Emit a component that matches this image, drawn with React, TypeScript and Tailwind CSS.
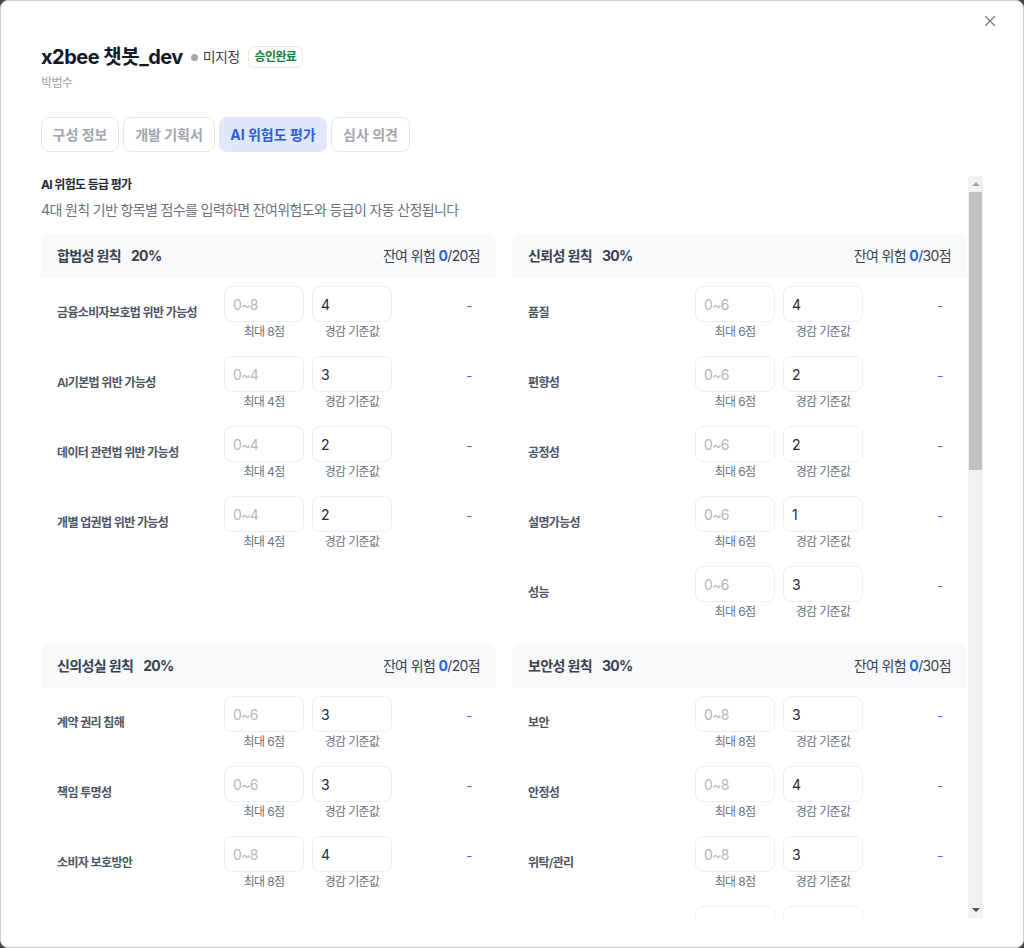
import React from 'react';
import { X } from 'lucide-react';

type Item = { label: string; max: number; base: number };
type Principle = { name: string; weight: number; total: number; items: Item[] };

const principles: Principle[] = [
  {
    name: '합법성 원칙',
    weight: 20,
    total: 20,
    items: [
      { label: '금융소비자보호법 위반 가능성', max: 8, base: 4 },
      { label: 'AI기본법 위반 가능성', max: 4, base: 3 },
      { label: '데이터 관련법 위반 가능성', max: 4, base: 2 },
      { label: '개별 업권법 위반 가능성', max: 4, base: 2 },
    ],
  },
  {
    name: '신뢰성 원칙',
    weight: 30,
    total: 30,
    items: [
      { label: '품질', max: 6, base: 4 },
      { label: '편향성', max: 6, base: 2 },
      { label: '공정성', max: 6, base: 2 },
      { label: '설명가능성', max: 6, base: 1 },
      { label: '성능', max: 6, base: 3 },
    ],
  },
  {
    name: '신의성실 원칙',
    weight: 20,
    total: 20,
    items: [
      { label: '계약 권리 침해', max: 6, base: 3 },
      { label: '책임 투명성', max: 6, base: 3 },
      { label: '소비자 보호방안', max: 8, base: 4 },
    ],
  },
  {
    name: '보안성 원칙',
    weight: 30,
    total: 30,
    items: [
      { label: '보안', max: 8, base: 3 },
      { label: '안정성', max: 8, base: 4 },
      { label: '위탁/관리', max: 8, base: 3 },
      { label: '개인정보 보호', max: 6, base: 2 },
    ],
  },
];

const grades = [
  { grade: '1등급', range: '0 ~ 20점', desc: '저위험 · 자체 점검 후 운영 가능' },
  { grade: '2등급', range: '21 ~ 40점', desc: '보통 · 정기 모니터링 필요' },
  { grade: '3등급', range: '41 ~ 60점', desc: '고위험 · 보완 조치 후 재심사' },
  { grade: '4등급', range: '61점 이상', desc: '매우 높음 · 운영 불가' },
];

const tabs = [
  { label: '구성 정보', w: 'w-[78px]' },
  { label: '개발 기획서', w: 'w-[92px]' },
  { label: 'AI 위험도 평가', w: 'w-[108px]' },
  { label: '심사 의견', w: 'w-[79px]' },
];

const ScoreRow: React.FC<{ item: Item }> = ({ item }) => (
  <div className="flex items-center py-2 pl-4 pr-[14px]">
    <div className="w-[167px] text-xs font-semibold text-[#4b5563]">{item.label}</div>
    <div className="flex gap-2">
      <div className="flex w-20 flex-col items-center">
        <input
          readOnly
          placeholder={`0~${item.max}`}
          className="h-9 w-20 rounded-lg border border-[#eceef1] bg-white px-2 text-sm text-gray-800 outline-none placeholder:text-[#b3b8c1]"
        />
        <span className="mt-0.5 text-xs leading-4 text-[#6b7280]">최대 {item.max}점</span>
      </div>
      <div className="flex w-20 flex-col items-center">
        <input
          readOnly
          value={item.base}
          className="h-9 w-20 rounded-lg border border-[#eceef1] bg-white px-2 text-sm text-gray-800 outline-none"
        />
        <span className="mt-0.5 text-xs leading-4 text-[#6b7280]">경감 기준값</span>
      </div>
    </div>
    <div className="flex flex-1 justify-end">
      <span className="mb-[14px] w-[26px] text-center text-sm text-[#4f6bed]">-</span>
    </div>
  </div>
);

const PrincipleCard: React.FC<{ p: Principle }> = ({ p }) => (
  <div className="rounded-lg bg-white">
    <div className="flex h-11 items-center justify-between rounded-t-lg bg-[#f8f9fb] px-4 text-sm text-[#374151]">
      <div className="font-bold">
        {p.name}
        <span className="ml-2.5">{p.weight}%</span>
      </div>
      <div>
        잔여 위험 <span className="font-bold text-[#2563eb]">0</span>/{p.total}점
      </div>
    </div>
    {p.items.map((item) => (
      <ScoreRow key={item.label} item={item} />
    ))}
  </div>
);

export default function App() {
  return (
    <div
      className="h-screen w-full bg-[#4a4a4a] tracking-[-0.04em]"
      style={{ fontFamily: 'Inter, "Noto Sans CJK KR", sans-serif' }}
    >
      <div className="relative flex h-full w-full flex-col rounded-lg border border-[#cfcfcf] bg-white px-10 pb-[29px] pt-[42px]">
        <button className="absolute right-5 top-[7px] p-1 text-[#6b7280]">
          <X className="h-[18px] w-[18px]" strokeWidth={1.5} />
        </button>

        <div className="flex h-7 items-center">
          <h1 className="text-xl font-bold tracking-[-0.025em] text-[#111827]">x2bee 챗봇_dev</h1>
          <span className="ml-2 h-[7px] w-[7px] rounded-full bg-[#a3a8b3]" />
          <span className="ml-[5px] text-sm text-[#374151]">미지정</span>
          <span className="ml-2 rounded-md border border-[#dcefe0] px-1.5 py-0.5 text-xs font-semibold text-[#15803d]">
            승인완료
          </span>
        </div>
        <div className="mt-1 text-xs text-[#9ca3af]">박범수</div>

        <div className="mt-[26px] flex gap-1">
          {tabs.map((t, i) =>
            i === 2 ? (
              <button
                key={t.label}
                className={`${t.w} h-[35px] rounded-lg border border-[#e0e7fb] bg-[#e0e7fb] text-sm font-bold tracking-normal text-[#2f5be0]`}
              >
                {t.label}
              </button>
            ) : (
              <button
                key={t.label}
                className={`${t.w} h-[35px] rounded-lg border border-[#e5e7eb] bg-white text-sm font-bold tracking-normal text-[#a1a6b0]`}
              >
                {t.label}
              </button>
            )
          )}
        </div>

        <div className="mt-6 flex min-h-0 flex-1">
          <div className="min-w-0 flex-1 overflow-y-auto [scrollbar-width:none]">
            <div className="pt-px text-xs font-bold text-[#1f2937]">AI 위험도 등급 평가</div>
            <p className="mt-[7px] text-sm leading-5 text-[#6b7280]">
              4대 원칙 기반 항목별 점수를 입력하면 잔여위험도와 등급이 자동 산정됩니다
            </p>

            <div className="mt-[14px] grid grid-cols-2 gap-4">
              {principles.map((p) => (
                <PrincipleCard key={p.name} p={p} />
              ))}
            </div>

            <div className="mt-8 text-xs font-bold text-[#1f2937]">잔여위험도 산정 결과</div>
            <div className="mt-3 grid grid-cols-5 gap-3">
              {principles.map((p) => (
                <div key={p.name} className="rounded-lg border border-[#eceef1] p-4">
                  <div className="text-xs text-[#6b7280]">{p.name}</div>
                  <div className="mt-2 text-lg font-bold text-[#1f2937]">
                    0<span className="text-sm font-normal text-[#9ca3af]">/{p.total}점</span>
                  </div>
                </div>
              ))}
              <div className="rounded-lg bg-[#f8f9fb] p-4">
                <div className="text-xs text-[#6b7280]">종합 잔여위험도</div>
                <div className="mt-2 text-lg font-bold text-[#2563eb]">
                  0<span className="text-sm font-normal text-[#9ca3af]">/100점</span>
                </div>
              </div>
            </div>

            <div className="mt-8 text-xs font-bold text-[#1f2937]">등급 기준</div>
            <div className="mt-3 overflow-hidden rounded-lg border border-[#eceef1]">
              {grades.map((g) => (
                <div
                  key={g.grade}
                  className="grid h-12 grid-cols-[120px_160px_1fr] items-center border-b border-[#eceef1] px-4 text-sm text-[#374151]"
                >
                  <div className="font-semibold">{g.grade}</div>
                  <div>{g.range}</div>
                  <div className="text-[#6b7280]">{g.desc}</div>
                </div>
              ))}
            </div>

            <div className="mt-8 text-xs font-bold text-[#1f2937]">위험도 평가 의견</div>
            <textarea
              readOnly
              placeholder="평가 의견을 입력하세요"
              className="mt-3 h-40 w-full resize-none rounded-lg border border-[#eceef1] p-3 text-sm outline-none placeholder:text-[#b3b8c1]"
            />
          </div>

          {/* classic scrollbar look */}
          <div className="ml-px flex w-[15px] flex-col bg-[#f1f1f1]">
            <div className="flex h-4 items-center justify-center">
              <div className="h-0 w-0 border-x-[4px] border-b-[4px] border-x-transparent border-b-[#a3a3a3]" />
            </div>
            <div className="mx-px h-[278px] bg-[#c1c1c1]" />
            <div className="flex-1" />
            <div className="flex h-4 items-center justify-center">
              <div className="h-0 w-0 border-x-[4px] border-t-[4px] border-x-transparent border-t-[#505050]" />
            </div>
          </div>
        </div>
      </div>
    </div>
  );
}
